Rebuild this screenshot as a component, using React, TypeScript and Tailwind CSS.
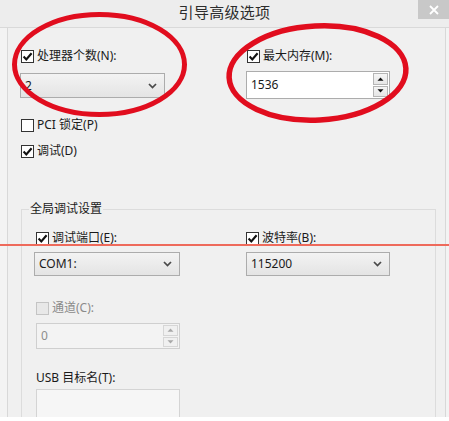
import React from "react";

const F = "font-['Noto_Sans','Noto_Sans_CJK_SC',sans-serif]";

function Check({ checked, disabled }: { checked?: boolean; disabled?: boolean }) {
  return (
    <span
      className={
        disabled
          ? "w-[13px] h-[13px] shrink-0 border border-[#c4c4c4] bg-[#e8e8e8] flex items-center justify-center"
          : "w-[13px] h-[13px] shrink-0 border border-[#333333] bg-white flex items-center justify-center"
      }
    >
      {checked && (
        <svg width="11" height="11" viewBox="0 0 11 11">
          <path d="M1.6 5.6 L4.3 8.4 L9.6 2.2" stroke="#111" strokeWidth="2.1" fill="none" />
        </svg>
      )}
    </span>
  );
}

function CheckRow({ label, checked, disabled }: { label: string; checked?: boolean; disabled?: boolean }) {
  return (
    <div className="flex items-center gap-[3px] h-[16px]">
      <Check checked={checked} disabled={disabled} />
      <span
        className={
          disabled
            ? "text-[12px] leading-[16px] text-[#8a8a8a] whitespace-nowrap"
            : "text-[12px] leading-[16px] text-[#1a1a1a] whitespace-nowrap"
        }
      >
        {label}
      </span>
    </div>
  );
}

function Chevron() {
  return (
    <svg width="9" height="6" viewBox="0 0 9 6">
      <path d="M1 1 L4.5 4.6 L8 1" stroke="#4a4a4a" strokeWidth="1.7" fill="none" />
    </svg>
  );
}

function Select({ value, w, h }: { value: string; w: string; h: string }) {
  return (
    <div
      className={`${w} ${h} border border-[#acacac] bg-linear-to-b from-[#f3f3f3] to-[#e4e4e4] flex items-center justify-between pl-[4px] pr-[7px] text-[12px] text-[#1a1a1a]`}
    >
      <span>{value}</span>
      <Chevron />
    </div>
  );
}

function Tri({ up, color }: { up?: boolean; color: string }) {
  return (
    <svg width="7" height="4" viewBox="0 0 7 4">
      {up ? <path d="M0.5 3.8 L3.5 0.5 L6.5 3.8 Z" fill={color} /> : <path d="M0.5 0.2 L3.5 3.5 L6.5 0.2 Z" fill={color} />}
    </svg>
  );
}

function Spin({ value, disabled }: { value: string; disabled?: boolean }) {
  return (
    <div
      className={
        disabled
          ? "w-[144px] h-[26px] border border-[#cfcfcf] bg-[#f3f3f3] flex"
          : "w-[144px] h-[28px] border border-[#acacac] bg-white flex"
      }
    >
      <div
        className={
          disabled
            ? "flex-1 flex items-center pl-[4px] text-[12px] text-[#8d8d8d]"
            : "flex-1 flex items-center pl-[4px] text-[12px] text-[#1a1a1a]"
        }
      >
        {value}
      </div>
      <div className="w-[16px] flex flex-col gap-[1px] py-[1px] pr-[1px]">
        <div
          className={
            disabled
              ? "flex-1 border border-[#d6d6d6] bg-[#f0f0f0] flex items-center justify-center"
              : "flex-1 border border-[#b5b5b5] bg-linear-to-b from-[#f5f5f5] to-[#e6e6e6] flex items-center justify-center"
          }
        >
          <Tri up color={disabled ? "#a8a8a8" : "#111"} />
        </div>
        <div
          className={
            disabled
              ? "flex-1 border border-[#d6d6d6] bg-[#f0f0f0] flex items-center justify-center"
              : "flex-1 border border-[#b5b5b5] bg-linear-to-b from-[#f5f5f5] to-[#e6e6e6] flex items-center justify-center"
          }
        >
          <Tri color={disabled ? "#a8a8a8" : "#111"} />
        </div>
      </div>
    </div>
  );
}

export default function App() {
  return (
    <div className={`relative w-[449px] h-[421px] bg-white overflow-hidden ${F}`}>
      <div className="h-[417px] flex flex-col bg-[#f0f0f0] overflow-hidden">
        {/* title bar */}
        <div className="relative h-[28px] shrink-0 bg-[#ededed] border-b border-[#d9d9d9] flex items-start justify-center">
          <span className="mt-[2px] text-[15px] leading-[20px] text-[#2c2c2c] tracking-[0.3px]">引导高级选项</span>
          <div className="absolute right-0 top-0 w-[31px] h-[19px] bg-[#c8c8c8] flex items-center justify-center">
            <svg width="10" height="10" viewBox="0 0 10 10">
              <path d="M1 1 L9 9 M9 1 L1 9" stroke="#ffffff" strokeWidth="1.8" />
            </svg>
          </div>
        </div>

        {/* body */}
        <div className="flex-1 flex pl-[7px] pr-[3px] bg-[#f3f3f3]">
          <div className="flex-1 border-l border-r border-[#d8d8d8] bg-[#f0f0f0] pl-[13px] pr-[9px] pt-[20px]">
            <div className="flex">
              <div className="w-[225px] flex flex-col">
                <CheckRow label="处理器个数(N):" checked />
                <div className="mt-[9px] -ml-[1px]">
                  <Select value="2" w="w-[145px]" h="h-[25px]" />
                </div>
              </div>
              <div className="flex flex-col">
                <div className="pl-[1px]">
                  <CheckRow label="最大内存(M):" checked />
                </div>
                <div className="mt-[7px]">
                  <Spin value="1536" />
                </div>
              </div>
            </div>

            <div className="mt-[18px]">
              <CheckRow label="PCI 锁定(P)" />
            </div>
            <div className="mt-[10px]">
              <CheckRow label="调试(D)" checked />
            </div>

            <fieldset className="mt-[42px] border border-[#dcdcdc] p-0">
              <legend className="ml-[7px] px-[1px] text-[12px] leading-[16px] text-[#1a1a1a]">全局调试设置</legend>
              <div className="px-[14px] pb-[20px]">
                <div className="flex pt-[13px]">
                  <div className="w-[210px] flex flex-col">
                    <CheckRow label="调试端口(E):" checked />
                    <div className="mt-[6px] -ml-[2px]">
                      <Select value="COM1:" w="w-[146px]" h="h-[24px]" />
                    </div>
                  </div>
                  <div className="flex flex-col">
                    <CheckRow label="波特率(B):" checked />
                    <div className="mt-[6px]">
                      <Select value="115200" w="w-[144px]" h="h-[24px]" />
                    </div>
                  </div>
                </div>
                <div className="mt-[24px]">
                  <CheckRow label="通道(C):" disabled />
                </div>
                <div className="mt-[7px]">
                  <Spin value="0" disabled />
                </div>
                <div className="mt-[21px] h-[16px] flex items-center text-[12px] text-[#1a1a1a]">USB 目标名(T):</div>
                <div className="mt-[3px] w-[144px] h-[40px] border border-[#d4d4d4] bg-[#f6f6f6]" />
              </div>
            </fieldset>
          </div>
        </div>
      </div>

      {/* annotations */}
      <div className="absolute left-0 top-[244px] w-[449px] h-[2px] bg-[#ee6a5b]" />
      <svg className="absolute left-0 top-0 pointer-events-none" width="449" height="421" viewBox="0 0 449 421">
        <ellipse cx="99.5" cy="64.5" rx="85" ry="50" fill="none" stroke="#e10d1e" strokeWidth="5" />
        <ellipse cx="317.5" cy="73" rx="88.5" ry="47" fill="none" stroke="#e10d1e" strokeWidth="5.5" transform="rotate(-3 317.5 73)" />
      </svg>
    </div>
  );
}
